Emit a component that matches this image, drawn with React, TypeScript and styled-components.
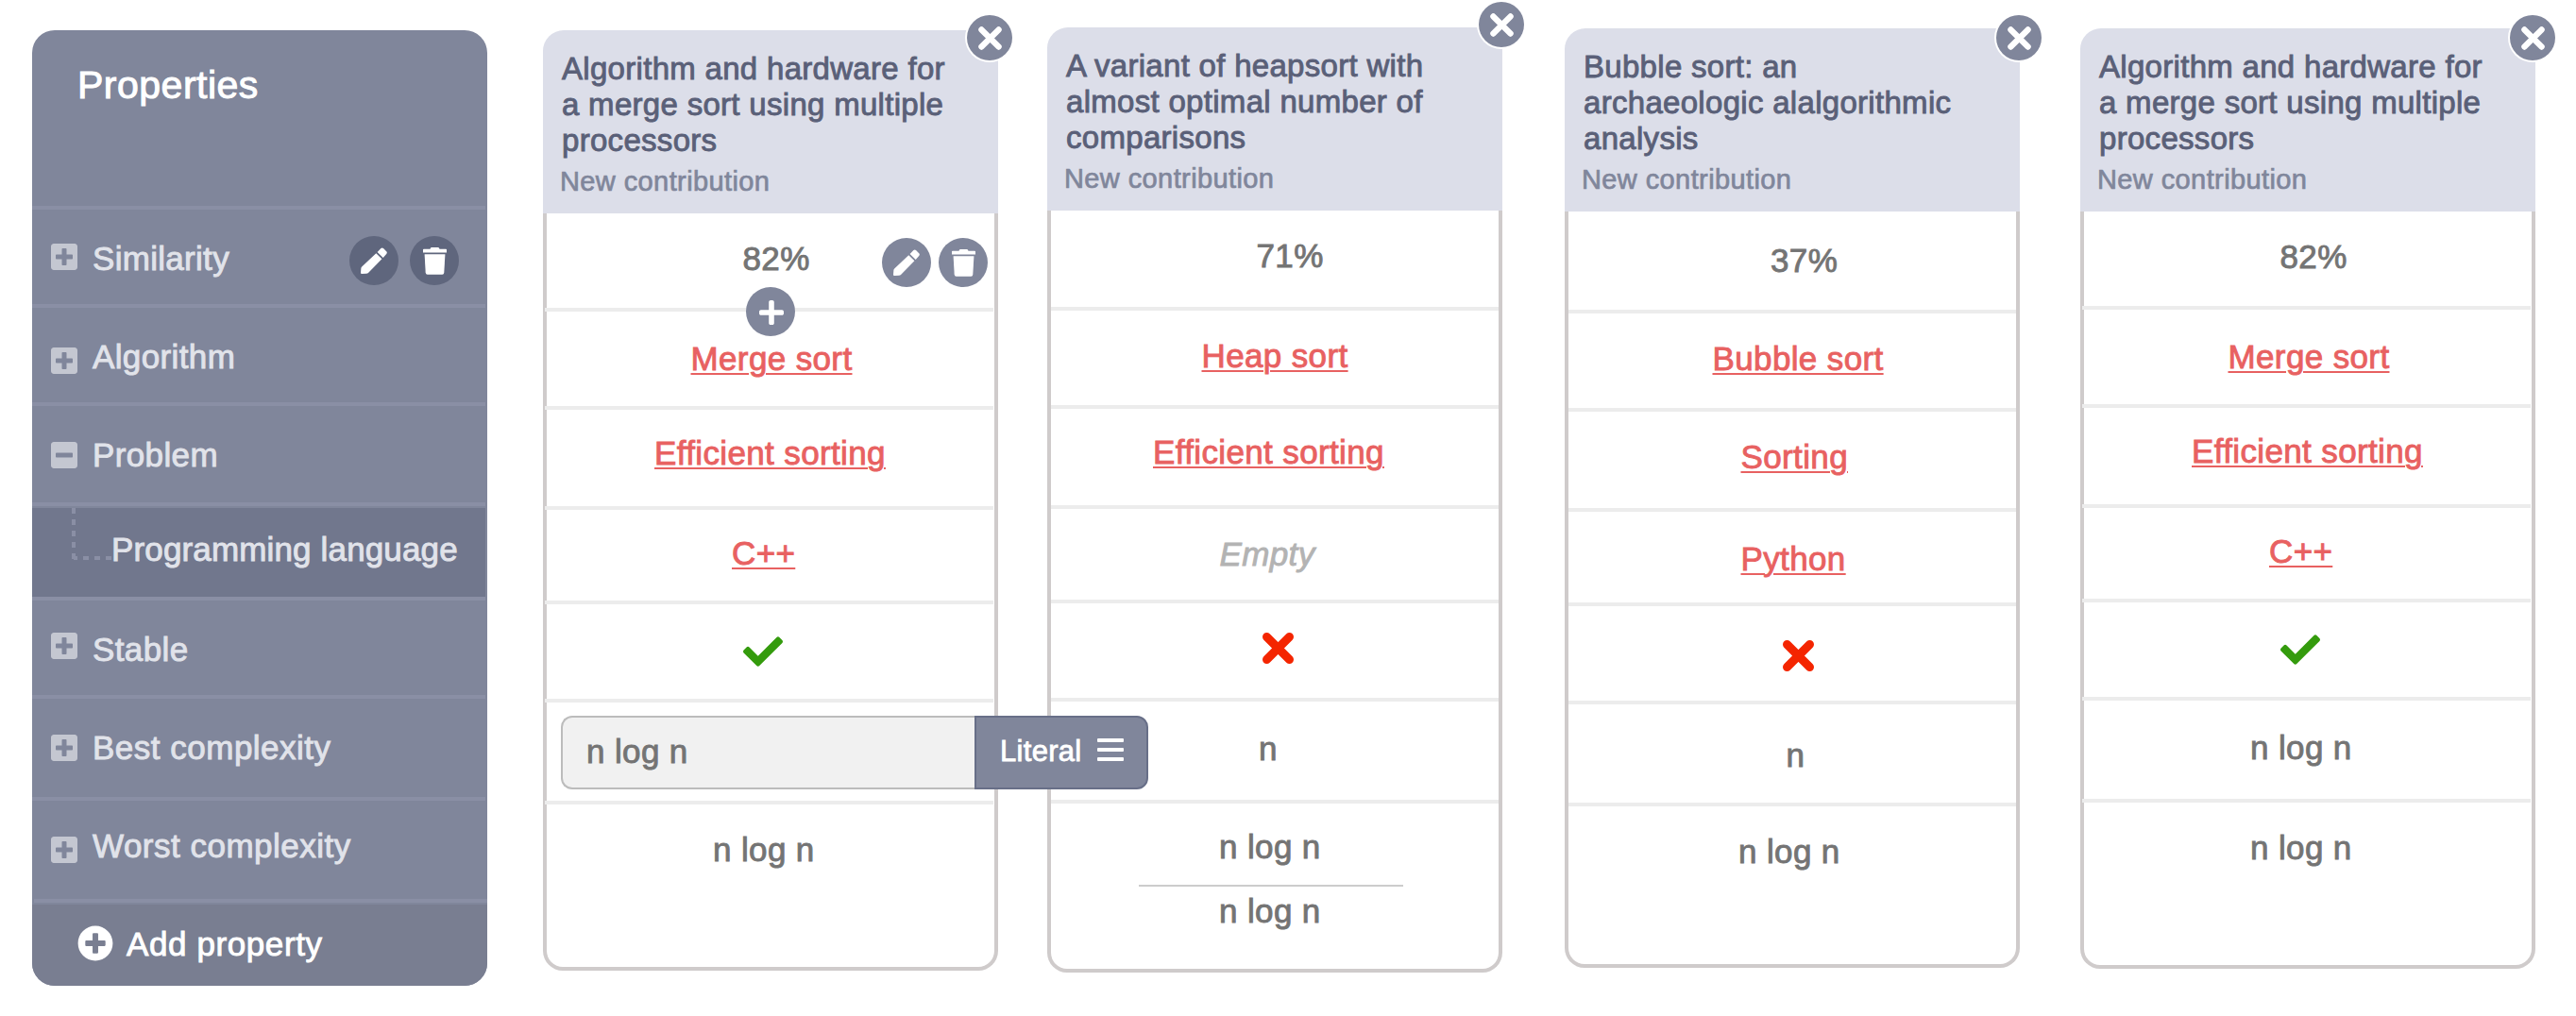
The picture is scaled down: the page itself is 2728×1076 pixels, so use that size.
import React from "react";
import styled, { createGlobalStyle, css } from "styled-components";
import { FaCheck, FaPlus, FaPlusSquare, FaMinusSquare, FaPlusCircle } from "react-icons/fa";

const color = {
  slate: "#80869b",
  slateLine: "#8a8fa5",
  slateDark: "#71778d",
  slateFooter: "#797e91",
  slateButton: "#5f667d",
  header: "#dcdee9",
  title: "#5a6078",
  frame: "#cfcbcb",
  line: "#ececec",
  value: "#747474",
  link: "#e86161",
  yes: "#349b0d",
  no: "#f42500",
};

const GlobalStyle = createGlobalStyle`
  * { box-sizing: border-box; }
  body {
    margin: 0;
    background: #fff;
    overflow: hidden;
    font-family: "Liberation Sans", Arial, sans-serif;
  }
`;

const Page = styled.main`
  display: flex;
  align-items: flex-start;
  width: 2728px;
  height: 1076px;
  padding-left: 34px;
`;

const label = css`
  font-size: 35px;
  line-height: 40px;
  letter-spacing: 0.37px;
  white-space: pre;
  -webkit-text-stroke: 0.9px currentColor;
`;

/* ---------- properties sidebar ---------- */

const Sidebar = styled.aside`
  flex: none;
  width: 482px;
  height: 1012px;
  margin-top: 32px;
  border-radius: 24px;
  overflow: hidden;
  background: ${color.slate};
`;

const SidebarHeader = styled.div`
  height: 190px;
  margin-right: 2px;
  padding: 34px 0 0 48px;
  border-bottom: 4px solid ${color.slateLine};
`;

const SidebarTitle = styled.h1`
  margin: 0;
  font-size: 41px;
  font-weight: 400;
  line-height: 48px;
  letter-spacing: 0.5px;
  color: #fff;
  -webkit-text-stroke: 1px currentColor;
`;

const PropertyRow = styled.div<{ $h: number; $last?: boolean }>`
  display: flex;
  align-items: flex-start;
  height: ${(p) => p.$h}px;
  margin: ${(p) => (p.$last ? "0 0 0 2px" : "0 2px 0 0")};
  padding: 0 28px 0 ${(p) => (p.$last ? 18 : 20)}px;
  border-bottom: 4px solid ${color.slateLine};
`;

const SubPropertyRow = styled.div`
  display: flex;
  align-items: flex-start;
  height: 98px;
  margin: 2px 2px 0 0;
  padding-left: 42px;
  background: ${color.slateDark};
  border-bottom: 4px solid ${color.slateLine};
`;

const Branch = styled.svg`
  flex: none;
  width: 42px;
  height: 56px;
`;

const PropertyName = styled.span<{ $top: number; $spacing?: number }>`
  ${label}
  margin-top: ${(p) => p.$top}px;
  letter-spacing: ${(p) => p.$spacing ?? 0.37}px;
  color: #e1e3ea;
`;

const Toggle = styled.span<{ $top: number }>`
  display: flex;
  flex: none;
  margin: ${(p) => p.$top}px 16px 0 0;
  color: #c4c7d1;
  svg {
    width: 28px;
    height: 28px;
  }
`;

const Footer = styled.div`
  display: flex;
  align-items: flex-start;
  height: 86px;
  margin-top: 2px;
  padding: 22px 0 0 48px;
  background: ${color.slateFooter};
  color: #fff;
  svg {
    flex: none;
    width: 38px;
    height: 38px;
    margin-right: 14px;
  }
`;

const FooterText = styled.span`
  ${label}
  letter-spacing: 0.6px;
`;

/* ---------- icons ---------- */

const PenSvg = styled.svg`
  width: 28px;
  height: 28px;
`;

const TrashSvg = styled.svg`
  width: 25px;
  height: 29px;
`;

const CrossSvg = styled.svg<{ $size: number }>`
  flex: none;
  width: ${(p) => p.$size}px;
  height: ${(p) => p.$size}px;
`;

function PenIcon() {
  return (
    <PenSvg viewBox="0 0 28 28" fill="currentColor">
      <path d="M16.3 6.2L22.4 12.3L8 27Q7.2 27.8 6 27.8L1.1 28Q0 28 0 26.9L.4 22Q.5 21.2 1.2 20.6Z" />
      <path d="M17.6 4.9L21.4 1.1Q22.7-.1 24 1.1L27.2 4.3Q28.4 5.5 27.2 6.9L23.7 10.9Z" />
    </PenSvg>
  );
}

function TrashIcon() {
  return (
    <TrashSvg viewBox="0 0 25 29" fill="currentColor">
      <path d="M8.9 0H16Q16.7 0 17 .8L17.5 1.8H24.2Q25 1.8 25 2.6V5.4H0V2.6Q0 1.8.8 1.8H7.5L8 .8Q8.3 0 8.9 0Z" />
      <path d="M1.6 7.2H23.4L22.3 26.8Q22.1 28.7 20.3 28.7H4.7Q2.9 28.7 2.7 26.8Z" />
    </TrashSvg>
  );
}

function CrossIcon({ size, weight, tint = "currentColor" }: { size: number; weight: number; tint?: string }) {
  return (
    <CrossSvg
      $size={size}
      viewBox="0 0 25 25"
      fill="none"
      stroke={tint}
      strokeWidth={weight}
      strokeLinecap="round"
    >
      <path d="M3.4 3.4L21.6 21.6M21.6 3.4L3.4 21.6" />
    </CrossSvg>
  );
}

const PlusIcon = styled(FaPlus)`
  width: 26px;
  height: 26px;
  margin: 2px 0 0 2px;
`;

/* ---------- round buttons ---------- */

const RoundButton = styled.button<{ $dark?: boolean }>`
  display: flex;
  align-items: center;
  justify-content: center;
  flex: none;
  width: 52px;
  height: 52px;
  padding: 0;
  border: 0;
  border-radius: 50%;
  color: #fff;
  background: ${(p) => (p.$dark ? color.slateButton : color.slate)};
`;

const SidebarActions = styled.div`
  display: flex;
  gap: 12px;
  margin: 28px 0 0 auto;
`;

const CellActions = styled.div`
  position: absolute;
  top: 26px;
  right: 6px;
  display: flex;
  gap: 8px;
`;

const InsertSlot = styled.div`
  position: absolute;
  z-index: 2;
  top: 78px;
  left: 213px;
`;

const CloseButton = styled.button<{ $top: number; $right: number }>`
  position: absolute;
  top: ${(p) => p.$top}px;
  right: ${(p) => p.$right}px;
  display: flex;
  align-items: center;
  justify-content: center;
  width: 48px;
  height: 48px;
  padding: 1px 0 0 1px;
  border: 0;
  border-radius: 50%;
  color: #fff;
  background: ${color.slate};
  box-shadow: 0 0 0 2px #fff;
`;

/* ---------- contribution columns ---------- */

const Column = styled.section<{ $top: number; $gap: number; $h: number }>`
  position: relative;
  display: flex;
  flex-direction: column;
  flex: none;
  width: 482px;
  height: ${(p) => p.$h}px;
  margin: ${(p) => p.$top}px 0 0 ${(p) => p.$gap}px;
`;

const ColumnHeader = styled.header`
  flex: none;
  height: 194px;
  padding: 22px 0 0 20px;
  border-radius: 22px 22px 0 0;
  background: ${color.header};
`;

const ColumnTitle = styled.h2`
  margin: 0;
  font-size: 33px;
  font-weight: 400;
  line-height: 38px;
  letter-spacing: 0.3px;
  white-space: pre;
  color: ${color.title};
  -webkit-text-stroke: 0.9px currentColor;
`;

const Contribution = styled.p`
  margin: 7px 0 0 -2px;
  font-size: 29px;
  line-height: 34px;
  letter-spacing: 0.4px;
  color: ${color.slate};
  -webkit-text-stroke: 0.7px currentColor;
`;

const ColumnBody = styled.div`
  flex: 1;
  border: 4px solid ${color.frame};
  border-top: 0;
  border-radius: 0 0 21px 21px;
`;

const Row = styled.div<{ $h: number; $x: number; $y: number; $bleed?: boolean }>`
  position: relative;
  display: flex;
  align-items: flex-start;
  height: ${(p) => p.$h}px;
  margin: ${(p) => (p.$bleed ? "0 1px 0 -2px" : "0")};
  padding: ${(p) => p.$y}px 0 0 ${(p) => p.$x - (p.$bleed ? 2 : 4)}px;
  border-bottom: 4px solid ${color.line};
  &:last-child {
    border-bottom: 0;
  }
`;

const Value = styled.span`
  ${label}
  color: ${color.value};
`;

const Empty = styled.em`
  ${label}
  color: #b3b3b3;
`;

const ResourceLink = styled.a`
  ${label}
  color: ${color.link};
  text-decoration: underline;
  text-decoration-thickness: 2px;
  text-underline-offset: 3px;
`;

const YesIcon = styled(FaCheck)`
  width: 42px;
  height: 32px;
  color: ${color.yes};
`;

const ValueStack = styled.div`
  display: flex;
  flex-direction: column;
  align-items: flex-start;
`;

const Divider = styled.hr`
  width: 280px;
  height: 2px;
  margin: 20px 0 6px -85px;
  border: 0;
  background: #cccccc;
`;

/* ---------- inline editor ---------- */

const Editor = styled.div`
  position: relative;
  z-index: 3;
  display: flex;
  flex: none;
  width: 622px;
  height: 78px;
`;

const EditorInput = styled.div`
  flex: 1;
  padding: 16px 0 0 25px;
  border: 2px solid #bcbcbc;
  border-right: 0;
  border-radius: 12px 0 0 12px;
  background: #f1f1f1;
`;

const EditorType = styled.div`
  display: flex;
  align-items: flex-start;
  width: 184px;
  padding: 18px 0 0 25px;
  border: 2px solid #686f88;
  border-radius: 0 12px 12px 0;
  background: ${color.slate};
  color: #fff;
`;

const TypeName = styled.span`
  width: 84px;
  font-size: 31px;
  line-height: 36px;
  letter-spacing: 0.3px;
  -webkit-text-stroke: 0.8px currentColor;
`;

const Bars = styled.span`
  display: flex;
  flex-direction: column;
  gap: 6px;
  margin: 4px 0 0 19px;
`;

const Bar = styled.i`
  width: 28px;
  height: 4px;
  border-radius: 1px;
  background: #fff;
`;

/* ---------- data ---------- */

type Kind = "value" | "link" | "empty" | "yes" | "no" | "edit" | "stack";

interface CellData {
  kind: Kind;
  text?: string;
  h: number;
  x: number;
  y: number;
  actions?: boolean;
}

interface ColumnData {
  title: string[];
  top: number;
  gap: number;
  h: number;
  closeTop: number;
  closeRight: number;
  bleed?: boolean;
  cells: CellData[];
}

const columns: ColumnData[] = [
  {
    title: ["Algorithm and hardware for", "a merge sort using multiple", "processors"],
    top: 32,
    gap: 59,
    h: 996,
    closeTop: -16,
    closeRight: -15,
    bleed: true,
    cells: [
      { kind: "value", text: "82%", h: 104, x: 211.5, y: 28, actions: true },
      { kind: "link", text: "Merge sort", h: 104, x: 156.5, y: 30 },
      { kind: "link", text: "Efficient sorting", h: 106, x: 118, y: 26 },
      { kind: "link", text: "C++", h: 100, x: 200, y: 26 },
      { kind: "yes", h: 104, x: 212, y: 34 },
      { kind: "edit", text: "n log n", h: 108, x: 19, y: 14 },
      { kind: "value", text: "n log n", h: 172, x: 180, y: 28 },
    ],
  },
  {
    title: ["A variant of heapsort with", "almost optimal number of", "comparisons"],
    top: 29,
    gap: 52,
    h: 1001,
    closeTop: -27,
    closeRight: -23,
    cells: [
      { kind: "value", text: "71%", h: 106, x: 221.5, y: 28 },
      { kind: "link", text: "Heap sort", h: 104, x: 163.5, y: 28 },
      { kind: "link", text: "Efficient sorting", h: 106, x: 112, y: 26 },
      { kind: "empty", text: "Empty", h: 100, x: 182.5, y: 28 },
      { kind: "no", h: 104, x: 228, y: 31 },
      { kind: "value", text: "n", h: 108, x: 224, y: 30 },
      { kind: "stack", text: "n log n", h: 175, x: 182, y: 26 },
    ],
  },
  {
    title: ["Bubble sort: an", "archaeologic alalgorithmic", "analysis"],
    top: 30,
    gap: 66,
    h: 995,
    closeTop: -14,
    closeRight: -23,
    cells: [
      { kind: "value", text: "37%", h: 108, x: 218, y: 32 },
      { kind: "link", text: "Bubble sort", h: 104, x: 156.5, y: 28 },
      { kind: "link", text: "Sorting", h: 106, x: 186.5, y: 28 },
      { kind: "link", text: "Python", h: 100, x: 186.5, y: 30 },
      { kind: "no", h: 104, x: 230.5, y: 36 },
      { kind: "value", text: "n", h: 108, x: 234.5, y: 34 },
      { kind: "value", text: "n log n", h: 167, x: 184, y: 28 },
    ],
  },
  {
    title: ["Algorithm and hardware for", "a merge sort using multiple", "processors"],
    top: 30,
    gap: 64,
    h: 996,
    closeTop: -14,
    closeRight: -21,
    bleed: true,
    cells: [
      { kind: "value", text: "82%", h: 104, x: 211.5, y: 28 },
      { kind: "link", text: "Merge sort", h: 104, x: 156.5, y: 30 },
      { kind: "link", text: "Efficient sorting", h: 106, x: 118, y: 26 },
      { kind: "link", text: "C++", h: 100, x: 200, y: 26 },
      { kind: "yes", h: 104, x: 212, y: 34 },
      { kind: "value", text: "n log n", h: 108, x: 180, y: 30 },
      { kind: "value", text: "n log n", h: 172, x: 180, y: 28 },
    ],
  },
];

const SQUARE = "0 32 448 448";

function CellContent({ cell }: { cell: CellData }) {
  switch (cell.kind) {
    case "link":
      return <ResourceLink>{cell.text}</ResourceLink>;
    case "empty":
      return <Empty>{cell.text}</Empty>;
    case "yes":
      return <YesIcon viewBox="0 65 512 382" />;
    case "no":
      return <CrossIcon size={33} weight={6.8} tint={color.no} />;
    case "edit":
      return (
        <Editor>
          <EditorInput>
            <Value>{cell.text}</Value>
          </EditorInput>
          <EditorType>
            <TypeName>Literal</TypeName>
            <Bars>
              <Bar />
              <Bar />
              <Bar />
            </Bars>
          </EditorType>
        </Editor>
      );
    case "stack":
      return (
        <ValueStack>
          <Value>{cell.text}</Value>
          <Divider />
          <Value>{cell.text}</Value>
        </ValueStack>
      );
    default:
      return <Value>{cell.text}</Value>;
  }
}

interface PropertyProps {
  name: string;
  h: number;
  iconTop: number;
  textTop?: number;
  spacing?: number;
  open?: boolean;
  last?: boolean;
  children?: React.ReactNode;
}

function Property({ name, h, iconTop, textTop = 32, spacing, open, last, children }: PropertyProps) {
  return (
    <PropertyRow $h={h} $last={last}>
      <Toggle $top={iconTop}>
        {open ? <FaMinusSquare viewBox={SQUARE} /> : <FaPlusSquare viewBox={SQUARE} />}
      </Toggle>
      <PropertyName $top={textTop} $spacing={spacing}>
        {name}
      </PropertyName>
      {children}
    </PropertyRow>
  );
}

export default function App() {
  return (
    <>
      <GlobalStyle />
      <Page>
        <Sidebar>
          <SidebarHeader>
            <SidebarTitle>Properties</SidebarTitle>
          </SidebarHeader>
          <Property name="Similarity" h={104} iconTop={36} spacing={0.3}>
            <SidebarActions>
              <RoundButton $dark>
                <PenIcon />
              </RoundButton>
              <RoundButton $dark>
                <TrashIcon />
              </RoundButton>
            </SidebarActions>
          </Property>
          <Property name="Algorithm" h={104} iconTop={42} />
          <Property name="Problem" h={106} iconTop={38} open />
          <SubPropertyRow>
            <Branch viewBox="0 0 42 56" fill="none" stroke={color.slateLine} strokeWidth="4">
              <path d="M2 0V54" strokeDasharray="6 6" />
              <path d="M2 53H42" strokeDasharray="6 6" strokeDashoffset="2" />
            </Branch>
            <PropertyName $top={24} $spacing={0.15}>
              Programming language
            </PropertyName>
          </SubPropertyRow>
          <Property name="Stable" h={104} iconTop={34} />
          <Property name="Best complexity" h={108} iconTop={38} spacing={0.5} />
          <Property name="Worst complexity" h={108} iconTop={38} textTop={28} spacing={0.5} last />
          <Footer>
            <FaPlusCircle />
            <FooterText>Add property</FooterText>
          </Footer>
        </Sidebar>

        {columns.map((col, i) => (
          <Column key={i} $top={col.top} $gap={col.gap} $h={col.h}>
            <ColumnHeader>
              <ColumnTitle>{col.title.join("\n")}</ColumnTitle>
              <Contribution>New contribution</Contribution>
            </ColumnHeader>
            <ColumnBody>
              {col.cells.map((cell, r) => (
                <Row key={r} $h={cell.h} $x={cell.x} $y={cell.y} $bleed={col.bleed}>
                  <CellContent cell={cell} />
                  {cell.actions && (
                    <>
                      <CellActions>
                        <RoundButton>
                          <PenIcon />
                        </RoundButton>
                        <RoundButton>
                          <TrashIcon />
                        </RoundButton>
                      </CellActions>
                      <InsertSlot>
                        <RoundButton>
                          <PlusIcon viewBox={SQUARE} />
                        </RoundButton>
                      </InsertSlot>
                    </>
                  )}
                </Row>
              ))}
            </ColumnBody>
            <CloseButton $top={col.closeTop} $right={col.closeRight}>
              <CrossIcon size={25} weight={6.3} />
            </CloseButton>
          </Column>
        ))}
      </Page>
    </>
  );
}
